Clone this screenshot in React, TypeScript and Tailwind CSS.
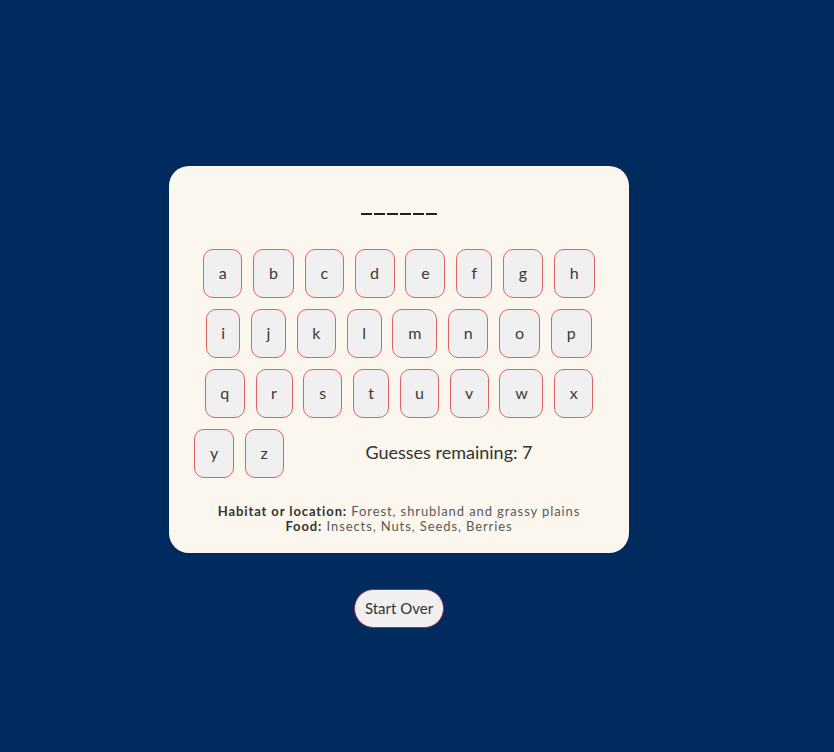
import React from 'react'

type Key = { l: string; w: string }

const rows: Key[][] = [
  [
    { l: 'a', w: 'w-[39px]' },
    { l: 'b', w: 'w-[41px]' },
    { l: 'c', w: 'w-[39px]' },
    { l: 'd', w: 'w-[40px]' },
    { l: 'e', w: 'w-[40px]' },
    { l: 'f', w: 'w-[36px]' },
    { l: 'g', w: 'w-[40px]' },
    { l: 'h', w: 'w-[41px]' },
  ],
  [
    { l: 'i', w: 'w-[34px]' },
    { l: 'j', w: 'w-[35px]' },
    { l: 'k', w: 'w-[39px]' },
    { l: 'l', w: 'w-[35px]' },
    { l: 'm', w: 'w-[45px]' },
    { l: 'n', w: 'w-[40px]' },
    { l: 'o', w: 'w-[41px]' },
    { l: 'p', w: 'w-[41px]' },
  ],
  [
    { l: 'q', w: 'w-[40px]' },
    { l: 'r', w: 'w-[37px]' },
    { l: 's', w: 'w-[39px]' },
    { l: 't', w: 'w-[36px]' },
    { l: 'u', w: 'w-[39px]' },
    { l: 'v', w: 'w-[39px]' },
    { l: 'w', w: 'w-[44px]' },
    { l: 'x', w: 'w-[39px]' },
  ],
]

const LetterKey = ({ k }: { k: Key }) => (
  <button
    className={`${k.w} h-[49px] shrink-0 rounded-[10px] border border-[#de6464] bg-[#f0f0f0] text-[16px] text-[#3a3a3a] flex items-center justify-center pb-[2px]`}
  >
    {k.l}
  </button>
)

export default function App() {
  return (
    <div className="min-h-[752px] w-full bg-[#002b5e] font-['Lato','Liberation_Sans',sans-serif] flex flex-col items-center pt-[166px] pr-[36px]">
      <div className="w-[460px] h-[387px] rounded-[20px] bg-[#fbf6ee] px-[25px] flex flex-col">
        <div className="h-[83px] flex items-end justify-center pb-[34px]">
          <div className="flex gap-[2px] -ml-[1px]">
            {Array.from({ length: 6 }).map((_, i) => (
              <span key={i} className="block w-[11px] h-[2px] bg-[#222]" />
            ))}
          </div>
        </div>
        <div className="flex flex-col gap-[11px]">
          {rows.map((row, i) => (
            <div key={i} className="flex justify-center gap-[10.8px]">
              {row.map(k => (
                <LetterKey key={k.l} k={k} />
              ))}
            </div>
          ))}
          <div className="flex gap-[10.5px]">
            <LetterKey k={{ l: 'y', w: 'w-[40px]' }} />
            <LetterKey k={{ l: 'z', w: 'w-[39px]' }} />
            <div className="flex-1 flex items-center justify-center text-[18px] text-[#333] pb-[2px]">
              Guesses remaining: 7
            </div>
          </div>
        </div>
        <div className="mt-[26px] text-center text-[13px] leading-[15px] tracking-[0.9px] text-[#5a5a5a]">
          <div>
            <span className="font-bold text-[#333]">Habitat or location:</span> Forest, shrubland and grassy plains
          </div>
          <div>
            <span className="font-bold text-[#333]">Food:</span> Insects, Nuts, Seeds, Berries
          </div>
        </div>
      </div>
      <button className="mt-[36px] h-[39px] w-[90px] rounded-full border border-[#a0304f] bg-[#f0f0f0] text-[15px] text-[#333] flex items-center justify-center pb-[1px]">
        Start Over
      </button>
    </div>
  )
}
